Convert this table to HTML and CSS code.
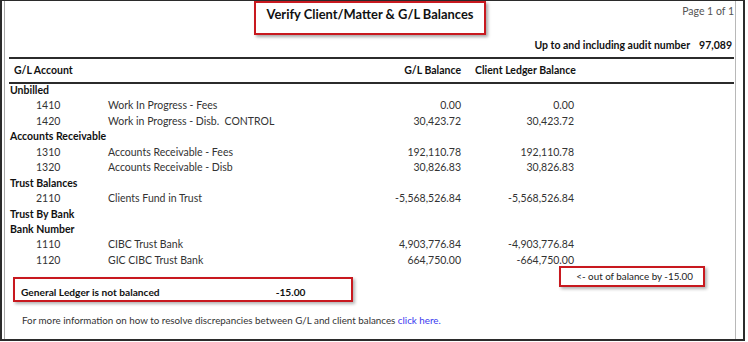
FILE: index.html
```html
<!DOCTYPE html>
<html>
<head>
<meta charset="utf-8">
<link rel="stylesheet" href="styles.css">
</head>
<body>
<div class="window">
  <div class="sheet">
    <div class="header">
      <div class="spacer"></div>
      <div class="title-box"><span class="title">Verify Client/Matter &amp; G/L Balances</span></div>
      <div class="page-no">Page 1 of 1</div>
    </div>
    <div class="audit"><span>Up to and including audit number</span><span class="audit-no">97,089</span></div>
    <div class="rule"></div>
    <div class="row colhead">
      <span class="c-acct">G/L Account</span>
      <span class="c-gl">G/L Balance</span>
      <span class="c-cl">Client Ledger Balance</span>
    </div>
    <div class="rule rule-b"></div>
    <div class="rows">
      <div class="row group"><span class="c-group">Unbilled</span></div>
      <div class="row"><span class="c-num">1410</span><span class="c-desc">Work In Progress - Fees</span><span class="c-gl">0.00</span><span class="c-cl">0.00</span></div>
      <div class="row"><span class="c-num">1420</span><span class="c-desc">Work in Progress - Disb.&nbsp; CONTROL</span><span class="c-gl">30,423.72</span><span class="c-cl">30,423.72</span></div>
      <div class="row group"><span class="c-group">Accounts Receivable</span></div>
      <div class="row"><span class="c-num">1310</span><span class="c-desc">Accounts Receivable - Fees</span><span class="c-gl">192,110.78</span><span class="c-cl">192,110.78</span></div>
      <div class="row"><span class="c-num">1320</span><span class="c-desc">Accounts Receivable - Disb</span><span class="c-gl">30,826.83</span><span class="c-cl">30,826.83</span></div>
      <div class="row group"><span class="c-group">Trust Balances</span></div>
      <div class="row"><span class="c-num">2110</span><span class="c-desc">Clients Fund in Trust</span><span class="c-gl">-5,568,526.84</span><span class="c-cl">-5,568,526.84</span></div>
      <div class="row group"><span class="c-group">Trust By Bank</span></div>
      <div class="row group"><span class="c-group">Bank Number</span></div>
      <div class="row"><span class="c-num">1110</span><span class="c-desc">CIBC Trust Bank</span><span class="c-gl">4,903,776.84</span><span class="c-cl">-4,903,776.84</span></div>
      <div class="row"><span class="c-num">1120</span><span class="c-desc">GIC CIBC Trust Bank</span><span class="c-gl">664,750.00</span><span class="c-cl">-664,750.00</span></div>
    </div>
    <div class="summary">
      <div class="out-box">&lt;- out of balance by -15.00</div>
      <div class="gl-box"><span>General Ledger is not balanced</span><span class="gl-amt">-15.00</span></div>
    </div>
    <p class="footer">For more information on how to resolve discrepancies between G/L and client balances <a class="link" href="#">click here.</a></p>
  </div>
</div>
</body>
</html>
```
FILE: styles.css
```css
* { box-sizing: border-box; }
html, body { margin: 0; padding: 0; background: #fff; }
body {
  font-family: Lato, "Liberation Sans", sans-serif;
  font-size: 10.5px;
  color: #333;
  width: 748px;
  height: 342px;
  overflow: hidden;
}
.window {
  width: 745px;
  height: 341px;
  border: 2px solid #2b2b2b;
  border-top-width: 1px;
  display: flex;
  align-items: stretch;
}
.sheet {
  margin-left: 2px;
  width: 732px;
  border-left: 1px solid #a8a8a8;
  border-right: 1px solid #b8b8b8;
  display: flex;
  flex-direction: column;
}
.header {
  display: grid;
  grid-template-columns: 1fr 232px 1fr;
  height: 34px;
}
.title-box {
  border: 2px solid #c8191f;
  box-shadow: 2px 2px 3px rgba(0,0,0,0.35);
  height: 34px;
  text-align: center;
  padding-top: 3px;
  background: #fff;
}
.title {
  font-weight: 700;
  font-size: 12.9px;
  color: #111;
}
.page-no {
  text-align: right;
  padding-right: 1px;
  padding-top: 4px;
  color: #555;
  font-size: 10.5px;
}
.audit {
  display: flex;
  justify-content: flex-end;
  gap: 9px;
  padding-right: 3px;
  margin-top: 4px;
  font-weight: 700;
  color: #111;
  font-size: 10.5px;
  height: 16px;
}
.rule {
  margin: 2px 1px 0 4px;
  height: 2px;
  background: #2b2b2b;
}
.rule-b { margin-top: 0; }
.row {
  display: grid;
  grid-template-columns: 26px 72px 252px 101px 113px;
  padding-left: 5px;
  height: 15.45px;
  line-height: 15.45px;
  white-space: nowrap;
}
.colhead {
  height: 23px;
  line-height: 23px;
  font-weight: 700;
  color: #111;
  padding-left: 9px;
  grid-template-columns: 346px 101px 113px;
}
.colhead .c-acct { grid-column: 1; }
.colhead .c-gl { grid-column: 2; }
.colhead .c-cl { grid-column: 3; text-align: left; padding-left: 14px; }
.rows { margin-top: -1px; }
.group .c-group {
  grid-column: 1 / 4;
  font-weight: 700;
  color: #111;
}
.c-num { grid-column: 2; }
.c-desc { grid-column: 3; }
.c-gl { grid-column: 4; text-align: right; }
.c-cl { grid-column: 5; text-align: right; }
.summary {
  display: grid;
  grid-template-columns: 8px 340px 206px 146px;
  grid-template-rows: 11px 10px 15px;
  margin-top: -2px;
}
.out-box {
  grid-column: 4;
  grid-row: 1 / 3;
  border: 2px solid #c8191f;
  box-shadow: 2px 2px 3px rgba(0,0,0,0.3);
  text-align: right;
  padding-right: 10px;
  line-height: 16px;
  color: #222;
  font-size: 9.8px;
}
.gl-box {
  grid-column: 2;
  grid-row: 2 / 4;
  border: 2px solid #c8191f;
  box-shadow: 2px 2px 3px rgba(0,0,0,0.3);
  display: flex;
  align-items: center;
  padding-left: 6px;
  font-weight: 700;
  font-size: 10.2px;
  color: #111;
  padding-top: 4px;
}
.gl-amt { margin-left: 116px; }
.footer {
  margin: 12px 0 0 17px;
  color: #333;
  font-size: 9.8px;
}
.link { color: #3a3af0; text-decoration: none; }
```
